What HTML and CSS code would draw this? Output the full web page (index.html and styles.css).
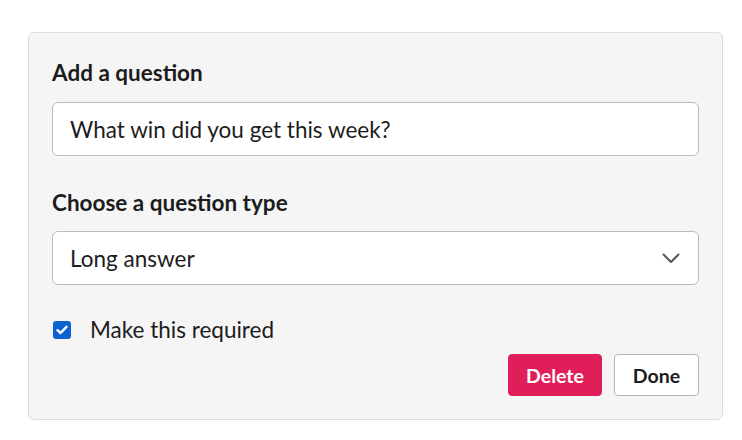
FILE: index.html
```html
<!DOCTYPE html>
<html lang="en">
<head>
<meta charset="utf-8">
<title>Question editor</title>
<link rel="stylesheet" href="styles.css">
</head>
<body>
<div class="page">
  <form class="card">
    <label class="label" for="q">Add a question</label>
    <input class="field" id="q" type="text" value="What win did you get this week?">

    <label class="label label-2" for="t">Choose a question type</label>
    <div class="select">
      <span class="select-text" id="t">Long answer</span>
      <svg class="chevron" width="18" height="11" viewBox="0 0 18 11" aria-hidden="true">
        <path d="M1.5 1.5 L9 9 L16.5 1.5" fill="none" stroke="#555" stroke-width="2" stroke-linecap="round" stroke-linejoin="round"/>
      </svg>
    </div>

    <label class="check-row">
      <span class="checkbox">
        <svg width="12" height="10" viewBox="0 0 12 10" aria-hidden="true">
          <path d="M1.5 5.2 L4.5 8 L10.5 1.8" fill="none" stroke="#fff" stroke-width="2.4" stroke-linecap="round" stroke-linejoin="round"/>
        </svg>
      </span>
      <span class="check-text">Make this required</span>
    </label>

    <div class="actions">
      <button type="button" class="btn btn-danger">Delete</button>
      <button type="button" class="btn btn-plain">Done</button>
    </div>
  </form>
</div>
</body>
</html>
```

FILE: styles.css
```css
* { box-sizing: border-box; }

html, body {
  margin: 0;
  padding: 0;
  background: #ffffff;
}

body {
  font-family: Lato, "Noto Sans", "Liberation Sans", sans-serif;
  color: #1d1c1d;
}

.page {
  padding: 32px 20px 0 28px;
}

.card {
  width: 695px;
  height: 388px;
  background: #f5f5f5;
  border: 1px solid #dcdcdc;
  border-radius: 6px;
  padding: 27px 23px 23px 23px;
  display: flex;
  flex-direction: column;
}

.label {
  display: block;
  font-size: 22.5px;
  line-height: 26px;
  font-weight: 700;
  margin-bottom: 16px;
}

.label-2 {
  margin-top: 34px;
  margin-bottom: 15px;
}

.field,
.select {
  width: 100%;
  height: 54px;
  flex: none;
  background: #ffffff;
  border: 1px solid #bcbcbc;
  border-radius: 6px;
  font-family: inherit;
  font-size: 22.5px;
  color: #1d1c1d;
  padding: 0 17px;
  margin: 0;
  outline: none;
}

.select {
  display: flex;
  align-items: center;
  justify-content: space-between;
  padding-right: 17px;
}

.chevron {
  display: block;
  margin-right: 1px;
}

.check-row {
  display: flex;
  align-items: center;
  margin-top: 32px;
  height: 26px;
}

.checkbox {
  width: 18px;
  height: 18px;
  border-radius: 3px;
  background: #0b62d0;
  display: flex;
  align-items: center;
  justify-content: center;
  margin-left: 1px;
}

.check-text {
  font-size: 22.5px;
  line-height: 26px;
  margin-left: 19px;
}

.actions {
  display: flex;
  justify-content: flex-end;
  gap: 12px;
  margin-top: 11px;
}

.btn {
  height: 42px;
  border-radius: 4px;
  font-family: inherit;
  font-size: 19.5px;
  font-weight: 700;
  padding: 0;
  margin: 0;
  text-align: center;
  cursor: pointer;
}

.btn-danger {
  background: #e01e5a;
  color: #ffffff;
  border: 1px solid #e01e5a;
  width: 94px;
}

.btn-plain {
  background: #ffffff;
  color: #1d1c1d;
  border: 1px solid #b8b8b8;
  width: 85px;
}
```
